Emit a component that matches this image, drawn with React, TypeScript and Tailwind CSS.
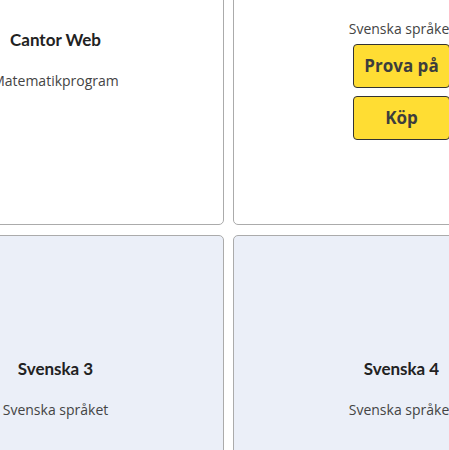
import React from "react";

type CardProps = {
  title: string;
  desc: string;
  buttons?: boolean;
  tinted?: boolean;
};

function Card({ title, desc, buttons, tinted }: CardProps) {
  return (
    <div
      className={`flex flex-col items-center justify-center text-center border border-[#ababab] rounded-[5px] ${
        tinted ? "bg-[#ebeff8]" : "bg-white"
      }`}
    >
      <h3 className="font-['Lato',sans-serif] font-bold text-[17px] leading-[24px] text-[#222222]">
        {title}
      </h3>
      <p className="mt-[19px] font-['Open_Sans',sans-serif] text-[14px] leading-[20px] text-[#444444]">
        {desc}
      </p>
      {buttons && (
        <div className="flex flex-col gap-[8px] pt-[5px] pb-[4px]">
          <button className="w-[97px] h-[44px] bg-[#ffdd33] border border-[#333333] rounded-[4px] font-['Open_Sans',sans-serif] font-bold text-[17px] text-[#3d3d3d]">
            Prova på
          </button>
          <button className="w-[97px] h-[44px] bg-[#ffdd33] border border-[#333333] rounded-[4px] font-['Open_Sans',sans-serif] font-bold text-[17px] text-[#3d3d3d]">
            Köp
          </button>
        </div>
      )}
    </div>
  );
}

export default function App() {
  return (
    <div className="w-[449px] h-[450px] overflow-hidden bg-white">
      <div className="ml-[-113px] mt-[-106px] grid grid-cols-[337px_337px] grid-rows-[331px_306px] gap-x-[9px] gap-y-[10px]">
        <Card title="Cantor Web" desc="Matematikprogram" />
        <Card title="Svenska 2" desc="Svenska språket" buttons />
        <Card title="Svenska 3" desc="Svenska språket" tinted />
        <Card title="Svenska 4" desc="Svenska språket" tinted />
      </div>
    </div>
  );
}
